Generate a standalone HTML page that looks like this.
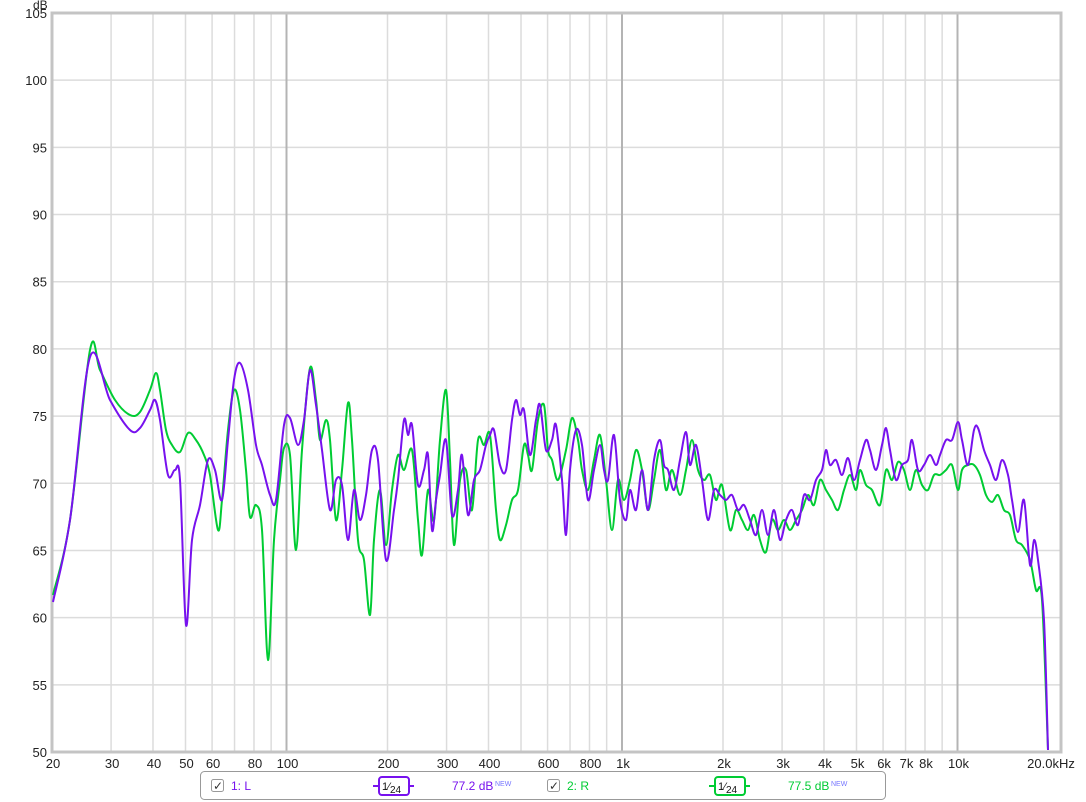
<!DOCTYPE html>
<html><head><meta charset="utf-8"><style>
html,body{margin:0;padding:0;background:#fff;width:1086px;height:802px;overflow:hidden;font-family:"Liberation Sans",sans-serif}
svg{position:absolute;left:0;top:0}
</style></head><body>
<svg id="s" width="1086" height="802" xmlns="http://www.w3.org/2000/svg" font-family="Liberation Sans, sans-serif" font-size="13">
<rect x="52" y="13" width="1009" height="739" fill="#fff"/>
<g id="grid"></g>
<rect x="52" y="13" width="1009" height="739" fill="none" stroke="#c4c4c4" stroke-width="3"/>
<text x="33" y="9" font-size="12" fill="#222">dB</text>
<g id="lab" fill="#222"></g>
<path id="pg" fill="none" stroke="#00cc33" stroke-width="2" stroke-linejoin="round"/>
<path id="pp" fill="none" stroke="#7711ee" stroke-width="2" stroke-linejoin="round"/>
<rect x="200.5" y="771.5" width="685" height="28" rx="4" fill="#fff" stroke="#999"/>
<rect x="211.5" y="779.5" width="12" height="12" rx="2" fill="#fff" stroke="#999"/>
<text x="213" y="790" font-size="12" fill="#333">✓</text>
<text x="231" y="790" font-size="12" fill="#7711ee">1: L</text>
<line x1="373" y1="786" x2="414" y2="786" stroke="#7711ee" stroke-width="2"/>
<rect x="379" y="777" width="30" height="18" rx="3" fill="#fff" stroke="#7711ee" stroke-width="2"/>
<text x="382" y="790" font-size="11" fill="#111">1⁄<tspan font-size="10" dy="3">24</tspan></text>
<text x="452" y="790" font-size="12" fill="#7711ee">77.2 dB</text>
<text x="495" y="786" font-size="7" fill="#7777ff">NEW</text>
<rect x="547.5" y="779.5" width="12" height="12" rx="2" fill="#fff" stroke="#999"/>
<text x="549" y="790" font-size="12" fill="#333">✓</text>
<text x="567" y="790" font-size="12" fill="#00cc33">2: R</text>
<line x1="709" y1="786" x2="750" y2="786" stroke="#00cc33" stroke-width="2"/>
<rect x="715" y="777" width="30" height="18" rx="3" fill="#fff" stroke="#00cc33" stroke-width="2"/>
<text x="718" y="790" font-size="11" fill="#111">1⁄<tspan font-size="10" dy="3">24</tspan></text>
<text x="788" y="790" font-size="12" fill="#00cc33">77.5 dB</text>
<text x="831" y="786" font-size="7" fill="#7777ff">NEW</text>
</svg>
<script>
var NS="http://www.w3.org/2000/svg";
function fx(f){return 52+335.5*(Math.log10(f)-Math.log10(20));}
function dy(d){return 13+(105-d)*739/55;}
var g=document.getElementById('grid'),lab=document.getElementById('lab');
function el(p,t,a,txt){var e=document.createElementNS(NS,t);for(var k in a)e.setAttribute(k,a[k]);if(txt)e.textContent=txt;p.appendChild(e);return e;}
for(var d=50;d<=105;d+=5){var y=dy(d);el(g,'line',{x1:52,x2:1061,y1:y,y2:y,stroke:'#dcdcdc','stroke-width':1.5});el(lab,'text',{x:47,y:y+5,'text-anchor':'end'},''+d);}
var fs=[30,40,50,60,70,80,90,100,200,300,400,500,600,700,800,900,1000,2000,3000,4000,5000,6000,7000,8000,9000,10000];
fs.forEach(function(f){var x=fx(f);var m=(f==100||f==1000||f==10000);el(g,'line',{x1:x,x2:x,y1:13,y2:752,stroke:m?'#b4b4b4':'#dcdcdc','stroke-width':m?2:1.5});});
var labs=[[20,'20'],[30,'30'],[40,'40'],[50,'50'],[60,'60'],[80,'80'],[100,'100'],[200,'200'],[300,'300'],[400,'400'],[600,'600'],[800,'800'],[1000,'1k'],[2000,'2k'],[3000,'3k'],[4000,'4k'],[5000,'5k'],[6000,'6k'],[7000,'7k'],[8000,'8k'],[10000,'10k']];
labs.forEach(function(l){el(lab,'text',{x:fx(l[0])+1,y:768,'text-anchor':'middle'},l[1]);});
el(lab,'text',{x:1051,y:768,'text-anchor':'middle'},'20.0kHz');
var P="53,602 70,520 90,357 110,400 130,430 140,428 150,410 155,400 160,420 168,475 175,470 180,480 186,625 192,540 200,505 208,460 215,470 222,500 228,440 234,380 240,363 248,390 256,445 262,465 270,495 276,500 284,425 290,418 298,445 304,420 310,370 316,405 322,450 330,510 336,480 342,485 348,540 354,490 360,520 366,495 372,450 378,460 386,560 394,510 398,480 404,420 408,435 412,425 418,485 424,470 428,455 432,530 436,500 440,475 446,440 452,515 458,490 462,455 468,515 474,480 480,470 486,445 490,435 494,430 500,465 506,470 512,420 516,400 520,415 524,410 530,455 536,420 540,405 546,450 552,440 556,425 562,480 566,535 570,470 576,430 582,445 588,500 594,470 600,445 604,470 608,480 614,435 620,500 626,520 630,490 636,510 642,470 648,510 654,460 660,440 664,465 668,470 674,490 680,460 686,432 690,465 696,445 702,480 708,520 714,490 720,495 726,500 732,495 738,510 744,505 750,520 756,535 762,510 768,535 774,510 780,540 786,520 792,510 798,525 804,495 810,500 816,480 822,470 826,450 830,465 836,460 842,475 848,458 854,480 860,460 866,440 870,450 876,470 882,445 886,428 890,450 896,480 902,465 908,460 912,440 918,470 924,465 930,455 936,465 940,455 946,440 952,440 958,422 962,440 968,465 974,430 978,428 984,450 990,465 996,480 1002,460 1008,475 1012,500 1018,532 1024,500 1030,565 1034,540 1038,560 1044,620 1048,750";
var G="53,595 70,520 90,350 100,370 115,400 130,415 140,412 150,390 156,373 160,390 166,430 172,445 180,452 188,433 196,440 204,455 210,475 218,530 222,500 228,430 234,390 240,410 246,470 250,517 256,505 262,530 268,660 274,540 280,480 284,448 290,455 296,550 302,450 310,368 316,400 320,440 326,420 330,440 336,520 342,470 348,403 352,440 358,540 364,560 370,615 374,540 380,490 386,545 392,490 398,455 404,470 412,450 418,520 422,555 428,490 434,520 440,440 446,390 450,460 454,545 460,480 466,470 472,510 478,440 484,445 490,435 496,510 500,540 506,525 512,500 518,490 524,445 528,455 532,470 538,420 544,405 548,450 552,460 558,480 566,450 572,418 578,440 582,470 588,490 594,460 600,435 606,480 612,530 618,480 624,500 630,480 636,450 642,470 648,510 654,480 660,450 666,490 672,470 680,495 686,470 692,440 698,470 704,480 710,475 716,500 722,485 730,530 736,510 742,520 748,530 754,515 760,540 766,552 772,520 778,530 784,520 790,530 796,520 802,510 808,495 814,505 820,480 826,490 832,500 838,510 844,490 850,475 856,490 860,470 866,485 872,490 880,505 886,470 892,480 898,462 904,470 910,490 916,470 922,485 928,490 934,475 940,475 946,470 952,465 958,490 962,470 968,465 974,465 980,475 986,495 992,502 998,495 1004,510 1010,515 1016,540 1022,545 1030,560 1036,590 1042,600 1048,750";
function smooth(s){var p=s.split(' ').map(function(t){return t.split(',').map(Number);});var d='M'+p[0][0]+','+p[0][1];
for(var i=0;i<p.length-1;i++){var p0=p[i-1]||p[i],p1=p[i],p2=p[i+1],p3=p[i+2]||p2;
var c1x=p1[0]+(p2[0]-p0[0])/6,c1y=p1[1]+(p2[1]-p0[1])/6,c2x=p2[0]-(p3[0]-p1[0])/6,c2y=p2[1]-(p3[1]-p1[1])/6;
d+=' C'+c1x.toFixed(1)+','+c1y.toFixed(1)+' '+c2x.toFixed(1)+','+c2y.toFixed(1)+' '+p2[0]+','+p2[1];}return d;}
document.getElementById('pp').setAttribute('d',smooth(P));
document.getElementById('pg').setAttribute('d',smooth(G));
</script>
</body></html>
